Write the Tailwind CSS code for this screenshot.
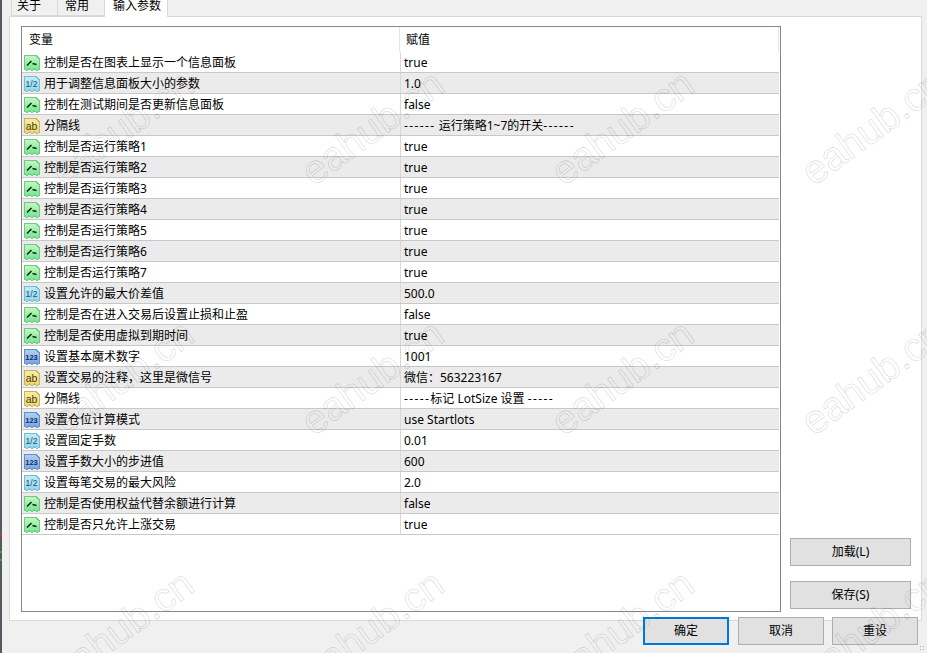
<!DOCTYPE html>
<html lang="en">
<head>
  <meta charset="UTF-8" />
  <title>输入参数</title>
  <script src="https://cdn.jsdelivr.net/npm/@tailwindcss/browser@4"></script>
</head>
<body class="bg-[#f0f0f0]">
  <!-- shared icons -->
  <svg class="absolute w-0 h-0">
    <defs>
      <linearGradient id="g-green" x1="0" y1="0" x2="0" y2="1"><stop offset="0" stop-color="#c8f6c4"/><stop offset="1" stop-color="#74e490"/></linearGradient>
      <linearGradient id="g-cyan" x1="0" y1="0" x2="0" y2="1"><stop offset="0" stop-color="#c4ecf6"/><stop offset="1" stop-color="#8fd6ec"/></linearGradient>
      <linearGradient id="g-yellow" x1="0" y1="0" x2="0" y2="1"><stop offset="0" stop-color="#f8eca8"/><stop offset="1" stop-color="#eed676"/></linearGradient>
      <linearGradient id="g-blue" x1="0" y1="0" x2="0" y2="1"><stop offset="0" stop-color="#b4d0f2"/><stop offset="1" stop-color="#76a6e2"/></linearGradient>
      <symbol id="i-bool" viewBox="0 0 16 16">
        <path d="M.5 .5H12L15.5 4V14L13 15.5 10.5 14 8 15.5 5.5 14 3 15.5 .5 14Z" fill="url(#g-green)" stroke="#6ccb85" shape-rendering="crispEdges"/>
        <path d="M3 10.5L7.5 6" stroke="#06300f" stroke-width="1.6" fill="none"/>
        <path d="M8.5 8.5L12.5 9.5" stroke="#06300f" stroke-width="1.3" fill="none"/>
      </symbol>
      <symbol id="i-num" viewBox="0 0 16 16">
        <path d="M.5 .5H12L15.5 4V14L13 15.5 10.5 14 8 15.5 5.5 14 3 15.5 .5 14Z" fill="url(#g-cyan)" stroke="#74bdd4" shape-rendering="crispEdges"/>
        <text x="7.5" y="10.5" text-anchor="middle" font-size="8.5" font-family="Liberation Sans" fill="#15506a">1/2</text>
      </symbol>
      <symbol id="i-str" viewBox="0 0 16 16">
        <path d="M.5 .5H12L15.5 4V14L13 15.5 10.5 14 8 15.5 5.5 14 3 15.5 .5 14Z" fill="url(#g-yellow)" stroke="#c9b354" shape-rendering="crispEdges"/>
        <text x="7.5" y="11.5" text-anchor="middle" font-size="10.5" font-family="Liberation Sans" fill="#4a3d0c">ab</text>
      </symbol>
      <symbol id="i-int" viewBox="0 0 16 16">
        <path d="M.5 .5H12L15.5 4V14L13 15.5 10.5 14 8 15.5 5.5 14 3 15.5 .5 14Z" fill="url(#g-blue)" stroke="#5f90ca" shape-rendering="crispEdges"/>
        <text x="7.5" y="11" text-anchor="middle" font-size="7.5" font-weight="700" font-family="Liberation Sans" fill="#0f2f5e">123</text>
      </symbol>
    </defs>
  </svg>

  <div class="relative w-[927px] h-[653px] overflow-hidden flex bg-[#f0f0f0] text-black text-[12px] font-['Noto_Sans','Noto_Sans_CJK_SC',sans-serif]">
    <!-- sliver of the chart window behind the dialog -->
    <div class="w-[2px] h-full bg-[#555a60] shrink-0 flex flex-col pt-[533px]">
      <div class="h-[2px] bg-[#d33]"></div>
      <div class="h-[16px]"></div>
      <div class="h-[2px] bg-[#2b2]"></div>
      <div class="h-[6px]"></div>
      <div class="h-[2px] bg-[#2b2]"></div>
    </div>

    <div class="flex-1 flex flex-col">
      <!-- tabs -->
      <div class="h-[16px] pl-[9px] flex shrink-0 relative z-10">
        <div class="w-[47px] h-[16px] pl-[5px] pb-[3px] border-r border-b border-l border-[#d9d9d9] flex items-center leading-[12px]">关于</div>
        <div class="w-[47px] h-[16px] pl-[7px] pb-[3px] border-r border-b border-[#d9d9d9] flex items-center leading-[12px]">常用</div>
        <div class="w-[63px] h-[17px] pl-[8px] pb-[5px] border-r border-[#d9d9d9] bg-white flex items-center overflow-hidden leading-[12px]">输入参数</div>
      </div>

      <!-- panel -->
      <div class="ml-[7px] w-[913px] h-[605px] shrink-0 bg-white border border-[#d9d9d9] flex pl-[11px] pt-[9px]">
        <div class="w-[760px] h-[586px] shrink-0 border border-[#828790] bg-white">
          <div class="h-[25px] w-[757px] flex leading-[25px]">
            <div class="w-[378px] pl-[7px] border-r border-[#e5e5e5]">变量</div>
            <div class="flex-1 pl-[6px] border-r border-[#e5e5e5]">赋值</div>
          </div>

          <div class="h-[21px] w-[757px] flex border-b border-[#c8c8c8] bg-white leading-[20px]"><div class="w-[379px] pl-[2px] pt-[2px] flex items-center gap-[4px] border-r border-[#d8d8d8]"><svg class="w-[16px] h-[16px] shrink-0"><use href="#i-bool"/></svg>控制是否在图表上显示一个信息面板</div><div class="pl-[3px] pt-[1px]">true</div></div>
          <div class="h-[21px] w-[757px] flex border-b border-[#c8c8c8] bg-[#ebebeb] leading-[20px]"><div class="w-[379px] pl-[2px] pt-[2px] flex items-center gap-[4px] border-r border-[#d8d8d8]"><svg class="w-[16px] h-[16px] shrink-0"><use href="#i-num"/></svg>用于调整信息面板大小的参数</div><div class="pl-[3px] pt-[1px]">1.0</div></div>
          <div class="h-[21px] w-[757px] flex border-b border-[#c8c8c8] bg-white leading-[20px]"><div class="w-[379px] pl-[2px] pt-[2px] flex items-center gap-[4px] border-r border-[#d8d8d8]"><svg class="w-[16px] h-[16px] shrink-0"><use href="#i-bool"/></svg>控制在测试期间是否更新信息面板</div><div class="pl-[3px] pt-[1px]">false</div></div>
          <div class="h-[21px] w-[757px] flex border-b border-[#c8c8c8] bg-[#ebebeb] leading-[20px]"><div class="w-[379px] pl-[2px] pt-[2px] flex items-center gap-[4px] border-r border-[#d8d8d8]"><svg class="w-[16px] h-[16px] shrink-0"><use href="#i-str"/></svg>分隔线</div><div class="pl-[3px] pt-[1px]"><span class="tracking-[1.4px]">------</span> 运行策略1~7的开关<span class="tracking-[1.4px]">------</span></div></div>
          <div class="h-[21px] w-[757px] flex border-b border-[#c8c8c8] bg-white leading-[20px]"><div class="w-[379px] pl-[2px] pt-[2px] flex items-center gap-[4px] border-r border-[#d8d8d8]"><svg class="w-[16px] h-[16px] shrink-0"><use href="#i-bool"/></svg>控制是否运行策略1</div><div class="pl-[3px] pt-[1px]">true</div></div>
          <div class="h-[21px] w-[757px] flex border-b border-[#c8c8c8] bg-[#ebebeb] leading-[20px]"><div class="w-[379px] pl-[2px] pt-[2px] flex items-center gap-[4px] border-r border-[#d8d8d8]"><svg class="w-[16px] h-[16px] shrink-0"><use href="#i-bool"/></svg>控制是否运行策略2</div><div class="pl-[3px] pt-[1px]">true</div></div>
          <div class="h-[21px] w-[757px] flex border-b border-[#c8c8c8] bg-white leading-[20px]"><div class="w-[379px] pl-[2px] pt-[2px] flex items-center gap-[4px] border-r border-[#d8d8d8]"><svg class="w-[16px] h-[16px] shrink-0"><use href="#i-bool"/></svg>控制是否运行策略3</div><div class="pl-[3px] pt-[1px]">true</div></div>
          <div class="h-[21px] w-[757px] flex border-b border-[#c8c8c8] bg-[#ebebeb] leading-[20px]"><div class="w-[379px] pl-[2px] pt-[2px] flex items-center gap-[4px] border-r border-[#d8d8d8]"><svg class="w-[16px] h-[16px] shrink-0"><use href="#i-bool"/></svg>控制是否运行策略4</div><div class="pl-[3px] pt-[1px]">true</div></div>
          <div class="h-[21px] w-[757px] flex border-b border-[#c8c8c8] bg-white leading-[20px]"><div class="w-[379px] pl-[2px] pt-[2px] flex items-center gap-[4px] border-r border-[#d8d8d8]"><svg class="w-[16px] h-[16px] shrink-0"><use href="#i-bool"/></svg>控制是否运行策略5</div><div class="pl-[3px] pt-[1px]">true</div></div>
          <div class="h-[21px] w-[757px] flex border-b border-[#c8c8c8] bg-[#ebebeb] leading-[20px]"><div class="w-[379px] pl-[2px] pt-[2px] flex items-center gap-[4px] border-r border-[#d8d8d8]"><svg class="w-[16px] h-[16px] shrink-0"><use href="#i-bool"/></svg>控制是否运行策略6</div><div class="pl-[3px] pt-[1px]">true</div></div>
          <div class="h-[21px] w-[757px] flex border-b border-[#c8c8c8] bg-white leading-[20px]"><div class="w-[379px] pl-[2px] pt-[2px] flex items-center gap-[4px] border-r border-[#d8d8d8]"><svg class="w-[16px] h-[16px] shrink-0"><use href="#i-bool"/></svg>控制是否运行策略7</div><div class="pl-[3px] pt-[1px]">true</div></div>
          <div class="h-[21px] w-[757px] flex border-b border-[#c8c8c8] bg-[#ebebeb] leading-[20px]"><div class="w-[379px] pl-[2px] pt-[2px] flex items-center gap-[4px] border-r border-[#d8d8d8]"><svg class="w-[16px] h-[16px] shrink-0"><use href="#i-num"/></svg>设置允许的最大价差值</div><div class="pl-[3px] pt-[1px]">500.0</div></div>
          <div class="h-[21px] w-[757px] flex border-b border-[#c8c8c8] bg-white leading-[20px]"><div class="w-[379px] pl-[2px] pt-[2px] flex items-center gap-[4px] border-r border-[#d8d8d8]"><svg class="w-[16px] h-[16px] shrink-0"><use href="#i-bool"/></svg>控制是否在进入交易后设置止损和止盈</div><div class="pl-[3px] pt-[1px]">false</div></div>
          <div class="h-[21px] w-[757px] flex border-b border-[#c8c8c8] bg-[#ebebeb] leading-[20px]"><div class="w-[379px] pl-[2px] pt-[2px] flex items-center gap-[4px] border-r border-[#d8d8d8]"><svg class="w-[16px] h-[16px] shrink-0"><use href="#i-bool"/></svg>控制是否使用虚拟到期时间</div><div class="pl-[3px] pt-[1px]">true</div></div>
          <div class="h-[21px] w-[757px] flex border-b border-[#c8c8c8] bg-white leading-[20px]"><div class="w-[379px] pl-[2px] pt-[2px] flex items-center gap-[4px] border-r border-[#d8d8d8]"><svg class="w-[16px] h-[16px] shrink-0"><use href="#i-int"/></svg>设置基本魔术数字</div><div class="pl-[3px] pt-[1px]">1001</div></div>
          <div class="h-[21px] w-[757px] flex border-b border-[#c8c8c8] bg-[#ebebeb] leading-[20px]"><div class="w-[379px] pl-[2px] pt-[2px] flex items-center gap-[4px] border-r border-[#d8d8d8]"><svg class="w-[16px] h-[16px] shrink-0"><use href="#i-str"/></svg>设置交易的注释，这里是微信号</div><div class="pl-[3px] pt-[1px]">微信：563223167</div></div>
          <div class="h-[21px] w-[757px] flex border-b border-[#c8c8c8] bg-white leading-[20px]"><div class="w-[379px] pl-[2px] pt-[2px] flex items-center gap-[4px] border-r border-[#d8d8d8]"><svg class="w-[16px] h-[16px] shrink-0"><use href="#i-str"/></svg>分隔线</div><div class="pl-[3px] pt-[1px]"><span class="tracking-[1.4px]">-----</span>标记 LotSize 设置 <span class="tracking-[1.4px]">-----</span></div></div>
          <div class="h-[21px] w-[757px] flex border-b border-[#c8c8c8] bg-[#ebebeb] leading-[20px]"><div class="w-[379px] pl-[2px] pt-[2px] flex items-center gap-[4px] border-r border-[#d8d8d8]"><svg class="w-[16px] h-[16px] shrink-0"><use href="#i-int"/></svg>设置仓位计算模式</div><div class="pl-[3px] pt-[1px]">use Startlots</div></div>
          <div class="h-[21px] w-[757px] flex border-b border-[#c8c8c8] bg-white leading-[20px]"><div class="w-[379px] pl-[2px] pt-[2px] flex items-center gap-[4px] border-r border-[#d8d8d8]"><svg class="w-[16px] h-[16px] shrink-0"><use href="#i-num"/></svg>设置固定手数</div><div class="pl-[3px] pt-[1px]">0.01</div></div>
          <div class="h-[21px] w-[757px] flex border-b border-[#c8c8c8] bg-[#ebebeb] leading-[20px]"><div class="w-[379px] pl-[2px] pt-[2px] flex items-center gap-[4px] border-r border-[#d8d8d8]"><svg class="w-[16px] h-[16px] shrink-0"><use href="#i-int"/></svg>设置手数大小的步进值</div><div class="pl-[3px] pt-[1px]">600</div></div>
          <div class="h-[21px] w-[757px] flex border-b border-[#c8c8c8] bg-white leading-[20px]"><div class="w-[379px] pl-[2px] pt-[2px] flex items-center gap-[4px] border-r border-[#d8d8d8]"><svg class="w-[16px] h-[16px] shrink-0"><use href="#i-num"/></svg>设置每笔交易的最大风险</div><div class="pl-[3px] pt-[1px]">2.0</div></div>
          <div class="h-[21px] w-[757px] flex border-b border-[#c8c8c8] bg-[#ebebeb] leading-[20px]"><div class="w-[379px] pl-[2px] pt-[2px] flex items-center gap-[4px] border-r border-[#d8d8d8]"><svg class="w-[16px] h-[16px] shrink-0"><use href="#i-bool"/></svg>控制是否使用权益代替余额进行计算</div><div class="pl-[3px] pt-[1px]">false</div></div>
          <div class="h-[21px] w-[757px] flex border-b border-[#c8c8c8] bg-white leading-[20px]"><div class="w-[379px] pl-[2px] pt-[2px] flex items-center gap-[4px] border-r border-[#d8d8d8]"><svg class="w-[16px] h-[16px] shrink-0"><use href="#i-bool"/></svg>控制是否只允许上涨交易</div><div class="pl-[3px] pt-[1px]">true</div></div>
        </div>

        <div class="ml-[9px] w-[121px] pt-[512px] flex flex-col gap-[15px]">
          <button class="h-[28px] bg-[#e1e1e1] border border-[#adadad]">加载(L)</button>
          <button class="h-[28px] bg-[#e1e1e1] border border-[#adadad]">保存(S)</button>
        </div>
      </div>

      <!-- footer buttons -->
      <div class="-mt-[4px] ml-[641px] flex relative">
        <button class="w-[86px] h-[28px] bg-[#e1e1e1] border-2 border-[#0078d7]">确定</button>
        <button class="ml-[9px] w-[86px] h-[28px] bg-[#e1e1e1] border border-[#adadad]">取消</button>
        <button class="ml-[8px] w-[86px] h-[28px] bg-[#e1e1e1] border border-[#adadad]">重设</button>
      </div>
    </div>

    <!-- resize grip -->
    <div class="absolute right-[1px] bottom-[1px] w-[7px] h-[7px] bg-[radial-gradient(#a8a8a8_1px,transparent_1px)] bg-[length:3px_3px]"></div>

    <!-- watermark -->
    <div class="absolute left-[37px] top-[103px] w-[170px] h-[48px] -rotate-36 text-center text-[40px] leading-[48px] text-transparent font-['Liberation_Sans'] [-webkit-text-stroke:0.8px_#00000026] pointer-events-none">eahub.cn</div>
    <div class="absolute left-[287px] top-[103px] w-[170px] h-[48px] -rotate-36 text-center text-[40px] leading-[48px] text-transparent font-['Liberation_Sans'] [-webkit-text-stroke:0.8px_#00000026] pointer-events-none">eahub.cn</div>
    <div class="absolute left-[537px] top-[103px] w-[170px] h-[48px] -rotate-36 text-center text-[40px] leading-[48px] text-transparent font-['Liberation_Sans'] [-webkit-text-stroke:0.8px_#00000026] pointer-events-none">eahub.cn</div>
    <div class="absolute left-[787px] top-[103px] w-[170px] h-[48px] -rotate-36 text-center text-[40px] leading-[48px] text-transparent font-['Liberation_Sans'] [-webkit-text-stroke:0.8px_#00000026] pointer-events-none">eahub.cn</div>
    <div class="absolute left-[37px] top-[353px] w-[170px] h-[48px] -rotate-36 text-center text-[40px] leading-[48px] text-transparent font-['Liberation_Sans'] [-webkit-text-stroke:0.8px_#00000026] pointer-events-none">eahub.cn</div>
    <div class="absolute left-[287px] top-[353px] w-[170px] h-[48px] -rotate-36 text-center text-[40px] leading-[48px] text-transparent font-['Liberation_Sans'] [-webkit-text-stroke:0.8px_#00000026] pointer-events-none">eahub.cn</div>
    <div class="absolute left-[537px] top-[353px] w-[170px] h-[48px] -rotate-36 text-center text-[40px] leading-[48px] text-transparent font-['Liberation_Sans'] [-webkit-text-stroke:0.8px_#00000026] pointer-events-none">eahub.cn</div>
    <div class="absolute left-[787px] top-[353px] w-[170px] h-[48px] -rotate-36 text-center text-[40px] leading-[48px] text-transparent font-['Liberation_Sans'] [-webkit-text-stroke:0.8px_#00000026] pointer-events-none">eahub.cn</div>
    <div class="absolute left-[37px] top-[603px] w-[170px] h-[48px] -rotate-36 text-center text-[40px] leading-[48px] text-transparent font-['Liberation_Sans'] [-webkit-text-stroke:0.8px_#00000026] pointer-events-none">eahub.cn</div>
    <div class="absolute left-[287px] top-[603px] w-[170px] h-[48px] -rotate-36 text-center text-[40px] leading-[48px] text-transparent font-['Liberation_Sans'] [-webkit-text-stroke:0.8px_#00000026] pointer-events-none">eahub.cn</div>
    <div class="absolute left-[537px] top-[603px] w-[170px] h-[48px] -rotate-36 text-center text-[40px] leading-[48px] text-transparent font-['Liberation_Sans'] [-webkit-text-stroke:0.8px_#00000026] pointer-events-none">eahub.cn</div>
    <div class="absolute left-[787px] top-[603px] w-[170px] h-[48px] -rotate-36 text-center text-[40px] leading-[48px] text-transparent font-['Liberation_Sans'] [-webkit-text-stroke:0.8px_#00000026] pointer-events-none">eahub.cn</div>
  </div>
</body>
</html>
